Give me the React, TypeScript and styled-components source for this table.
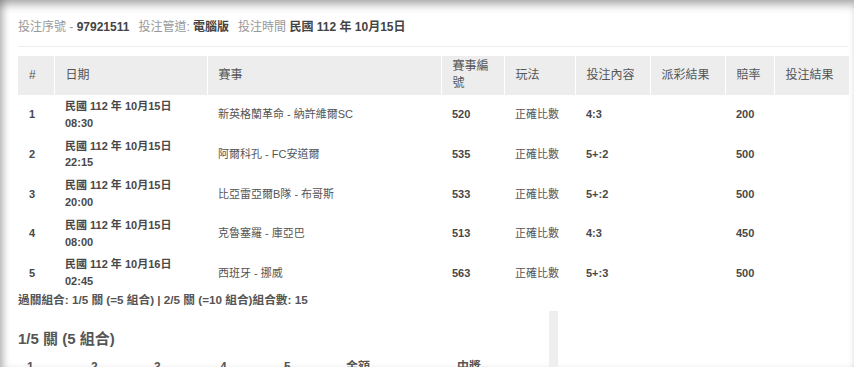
import React from "react";
import styled, { createGlobalStyle } from "styled-components";

const GlobalStyle = createGlobalStyle`
  html, body { margin: 0; padding: 0; background: #fff; }
  body {
    font-family: "Liberation Sans", Arial, "Noto Sans CJK TC", sans-serif;
    color: #555;
  }
`;

const Page = styled.div`
  height: 367px;
  overflow: hidden;
  background: #fff;
  box-shadow: inset 0 8px 8px -3px rgba(0, 0, 0, 0.3),
    inset 7px 0 7px -3px rgba(0, 0, 0, 0.22);
  padding: 18px 5px 0 18px;
  box-sizing: border-box;
`;

const InfoBar = styled.div`
  font-size: 12px;
  line-height: 18px;
  padding-bottom: 10px;
  border-bottom: 1px solid #eee;
  margin-right: 1px;
  white-space: nowrap;
`;

const InfoItem = styled.span`
  margin-right: 9px;
`;

const InfoLabel = styled.span`
  color: #999;
`;

const InfoValue = styled.span`
  color: #444;
  font-weight: bold;
`;

const BetTable = styled.table`
  margin-top: 9px;
  width: 831px;
  border-collapse: collapse;
  table-layout: fixed;
  font-size: 11px;
`;

const HeadCell = styled.th`
  background: #ededed;
  color: #555;
  font-weight: normal;
  font-size: 12px;
  text-align: left;
  line-height: 17px;
  padding: 2px 11px 3px 11px;
  border-left: 1px solid #fff;
  &:first-child { border-left: none; }
`;

const Cell = styled.td<{ $bold?: boolean }>`
  padding: 3px 11px;
  line-height: 16.8px;
  vertical-align: middle;
  color: ${(p) => (p.$bold ? "#484848" : "#555")};
  font-weight: ${(p) => (p.$bold ? "bold" : "normal")};
`;

const Summary = styled.div`
  font-size: 11.7px;
  line-height: 14px;
  font-weight: bold;
  color: #555;
  white-space: nowrap;
`;

const SubPanel = styled.div`
  margin-top: 4px;
  width: 531px;
  border-right: 9px solid #eeeeee;
  padding-top: 17px;
  height: 60px;
`;

const SubTitle = styled.h3`
  margin: 0;
  font-size: 15px;
  line-height: 21px;
  font-weight: bold;
  color: #555;
`;

const SubTable = styled.table`
  margin-top: 10px;
  border-collapse: collapse;
  table-layout: fixed;
  width: 531px;
  font-size: 12px;
`;

const SubHead = styled.th`
  text-align: left;
  font-weight: bold;
  color: #555;
  padding: 0 0 0 9px;
  line-height: 16px;
`;

type Row = {
  n: number;
  date: string;
  time: string;
  match: string;
  code: string;
  play: string;
  pick: string;
  odds: string;
};

const rows: Row[] = [
  { n: 1, date: "民國 112 年 10月15日", time: "08:30", match: "新英格蘭革命 - 納許維爾SC", code: "520", play: "正確比數", pick: "4:3", odds: "200" },
  { n: 2, date: "民國 112 年 10月15日", time: "22:15", match: "阿爾科孔 - FC安道爾", code: "535", play: "正確比數", pick: "5+:2", odds: "500" },
  { n: 3, date: "民國 112 年 10月15日", time: "20:00", match: "比亞雷亞爾B隊 - 布哥斯", code: "533", play: "正確比數", pick: "5+:2", odds: "500" },
  { n: 4, date: "民國 112 年 10月15日", time: "08:00", match: "克魯塞羅 - 庫亞巴", code: "513", play: "正確比數", pick: "4:3", odds: "450" },
  { n: 5, date: "民國 112 年 10月16日", time: "02:45", match: "西班牙 - 挪威", code: "563", play: "正確比數", pick: "5+:3", odds: "500" },
];

const mainCols = [36, 153, 234, 63, 71, 75, 75, 49, 75];
const headers = ["#", "日期", "賽事", "賽事編號", "玩法", "投注內容", "派彩結果", "賠率", "投注結果"];
const subCols = [64, 63, 66, 64, 62, 111, 101];
const subHeaders = ["1", "2", "3", "4", "5", "金額", "中獎"];

export default function App() {
  return (
    <>
      <GlobalStyle />
      <Page>
        <InfoBar>
          <InfoItem>
            <InfoLabel>投注序號 - </InfoLabel>
            <InfoValue>97921511</InfoValue>
          </InfoItem>
          <InfoItem>
            <InfoLabel>投注管道: </InfoLabel>
            <InfoValue>電腦版</InfoValue>
          </InfoItem>
          <InfoItem>
            <InfoLabel>投注時間 </InfoLabel>
            <InfoValue>民國 112 年 10月15日</InfoValue>
          </InfoItem>
        </InfoBar>
        <BetTable>
          <colgroup>
            {mainCols.map((w, i) => (
              <col key={i} style={{ width: w }} />
            ))}
          </colgroup>
          <thead>
            <tr>
              {headers.map((h) => (
                <HeadCell key={h}>{h}</HeadCell>
              ))}
            </tr>
          </thead>
          <tbody>
            {rows.map((r) => (
              <tr key={r.n}>
                <Cell $bold>{r.n}</Cell>
                <Cell $bold>
                  {r.date}
                  <br />
                  {r.time}
                </Cell>
                <Cell>{r.match}</Cell>
                <Cell $bold>{r.code}</Cell>
                <Cell>{r.play}</Cell>
                <Cell $bold>{r.pick}</Cell>
                <Cell></Cell>
                <Cell $bold>{r.odds}</Cell>
                <Cell></Cell>
              </tr>
            ))}
          </tbody>
        </BetTable>
        <Summary>過關組合: 1/5 關 (=5 組合) | 2/5 關 (=10 組合)組合數: 15</Summary>
        <SubPanel>
          <SubTitle>1/5 關 (5 組合)</SubTitle>
          <SubTable>
            <colgroup>
              {subCols.map((w, i) => (
                <col key={i} style={{ width: w }} />
              ))}
            </colgroup>
            <thead>
              <tr>
                {subHeaders.map((h) => (
                  <SubHead key={h}>{h}</SubHead>
                ))}
              </tr>
            </thead>
          </SubTable>
        </SubPanel>
      </Page>
    </>
  );
}
